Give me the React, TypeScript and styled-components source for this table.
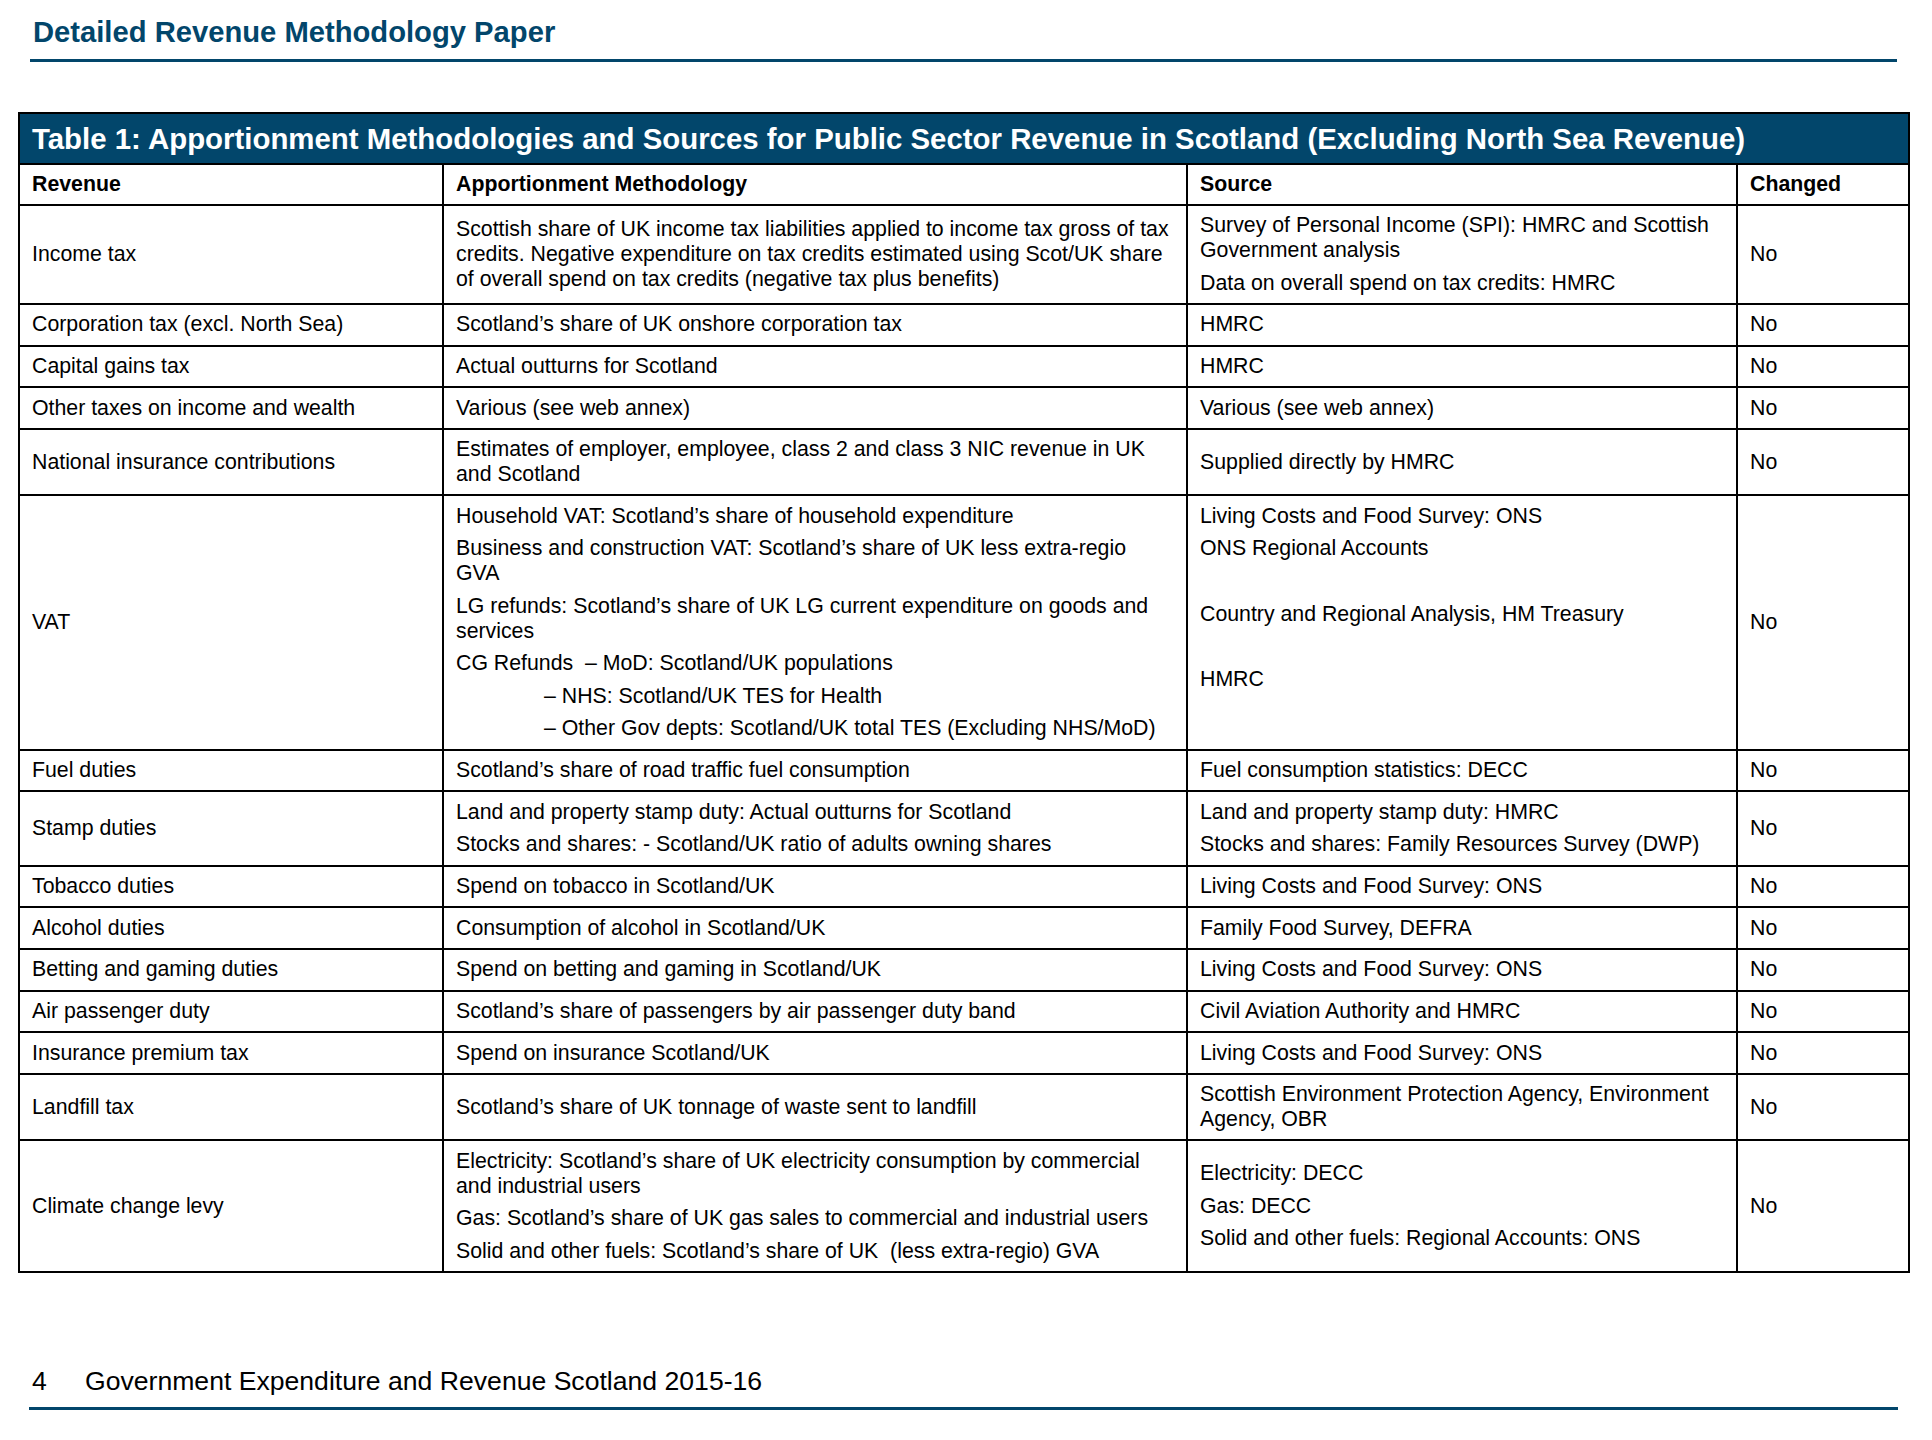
import React from "react";
import styled, { createGlobalStyle } from "styled-components";

const BLUE = "#02466b";

const Global = createGlobalStyle`
  html, body { margin: 0; padding: 0; background: #ffffff; }
  body { font-family: "Liberation Sans", Arial, Helvetica, sans-serif; color: #000; }
`;

const Page = styled.div`
  width: 1932px;
  display: flex;
  flex-direction: column;
`;

const Header = styled.header`
  margin-left: 30px;
  width: 1867px;
  padding: 15px 0 10px 3px;
  border-bottom: 3px solid ${BLUE};
  box-sizing: border-box;
`;

const Title = styled.h1`
  margin: 0;
  font-size: 29.2px;
  line-height: 34px;
  font-weight: 700;
  color: ${BLUE};
`;

const Table = styled.table`
  margin: 50px 0 0 18px;
  width: 1890px;
  border-collapse: collapse;
  table-layout: fixed;
  border: 2px solid #000;
  font-size: 21.3px;
  line-height: 24.8px;
`;

const TitleCell = styled.th`
  background: ${BLUE};
  color: #fff;
  font-size: 29.4px;
  line-height: 33px;
  font-weight: 700;
  text-align: left;
  padding: 8px 12px;
  border: 2px solid #000;
  white-space: nowrap;
`;

const HeadCell = styled.th`
  text-align: left;
  font-weight: 700;
  padding: 7px 12px;
  border: 2px solid #000;
  white-space: nowrap;
`;

const Cell = styled.td<{ $top?: boolean }>`
  vertical-align: ${(p) => (p.$top ? "top" : "middle")};
  padding: 7.45px 12px;
  border: 2px solid #000;
`;

const Para = styled.div<{ $indent?: boolean }>`
  white-space: pre;
  padding-left: ${(p) => (p.$indent ? "88px" : "0")};
  min-height: 24.8px;
  & + & {
    margin-top: 7.8px;
  }
`;

const Footer = styled.footer`
  margin: 93px 0 0 29px;
  width: 1869px;
  padding: 0 0 11px 3px;
  border-bottom: 3px solid ${BLUE};
  box-sizing: border-box;
  display: flex;
  align-items: baseline;
  font-size: 26.6px;
  line-height: 30px;
`;

const PageNum = styled.span`
  width: 53px;
`;

const FooterText = styled.span``;

type P = string | { text: string; indent?: boolean };

interface Row {
  revenue: string;
  method: P[];
  source: P[];
  sourceTop?: boolean;
  changed: string;
}

const rows: Row[] = [
  {
    revenue: "Income tax",
    method: [
      "Scottish share of UK income tax liabilities applied to income tax gross of tax\ncredits. Negative expenditure on tax credits estimated using Scot/UK share\nof overall spend on tax credits (negative tax plus benefits)",
    ],
    source: [
      "Survey of Personal Income (SPI): HMRC and Scottish\nGovernment analysis",
      "Data on overall spend on tax credits: HMRC",
    ],
    changed: "No",
  },
  {
    revenue: "Corporation tax (excl. North Sea)",
    method: ["Scotland’s share of UK onshore corporation tax"],
    source: ["HMRC"],
    changed: "No",
  },
  {
    revenue: "Capital gains tax",
    method: ["Actual outturns for Scotland"],
    source: ["HMRC"],
    changed: "No",
  },
  {
    revenue: "Other taxes on income and wealth",
    method: ["Various (see web annex)"],
    source: ["Various (see web annex)"],
    changed: "No",
  },
  {
    revenue: "National insurance contributions",
    method: ["Estimates of employer, employee, class 2 and class 3 NIC revenue in UK\nand Scotland"],
    source: ["Supplied directly by HMRC"],
    changed: "No",
  },
  {
    revenue: "VAT",
    method: [
      "Household VAT: Scotland’s share of household expenditure",
      "Business and construction VAT: Scotland’s share of UK less extra-regio\nGVA",
      "LG refunds: Scotland’s share of UK LG current expenditure on goods and\nservices",
      "CG Refunds  – MoD: Scotland/UK populations",
      { text: "– NHS: Scotland/UK TES for Health", indent: true },
      { text: "– Other Gov depts: Scotland/UK total TES (Excluding NHS/MoD)", indent: true },
    ],
    source: [
      "Living Costs and Food Survey: ONS",
      "ONS Regional Accounts",
      "",
      "Country and Regional Analysis, HM Treasury",
      "",
      "HMRC",
    ],
    sourceTop: true,
    changed: "No",
  },
  {
    revenue: "Fuel duties",
    method: ["Scotland’s share of road traffic fuel consumption"],
    source: ["Fuel consumption statistics: DECC"],
    changed: "No",
  },
  {
    revenue: "Stamp duties",
    method: [
      "Land and property stamp duty: Actual outturns for Scotland",
      "Stocks and shares: - Scotland/UK ratio of adults owning shares",
    ],
    source: [
      "Land and property stamp duty: HMRC",
      "Stocks and shares: Family Resources Survey (DWP)",
    ],
    changed: "No",
  },
  {
    revenue: "Tobacco duties",
    method: ["Spend on tobacco in Scotland/UK"],
    source: ["Living Costs and Food Survey: ONS"],
    changed: "No",
  },
  {
    revenue: "Alcohol duties",
    method: ["Consumption of alcohol in Scotland/UK"],
    source: ["Family Food Survey, DEFRA"],
    changed: "No",
  },
  {
    revenue: "Betting and gaming duties",
    method: ["Spend on betting and gaming in Scotland/UK"],
    source: ["Living Costs and Food Survey: ONS"],
    changed: "No",
  },
  {
    revenue: "Air passenger duty",
    method: ["Scotland’s share of passengers by air passenger duty band"],
    source: ["Civil Aviation Authority and HMRC"],
    changed: "No",
  },
  {
    revenue: "Insurance premium tax",
    method: ["Spend on insurance Scotland/UK"],
    source: ["Living Costs and Food Survey: ONS"],
    changed: "No",
  },
  {
    revenue: "Landfill tax",
    method: ["Scotland’s share of UK tonnage of waste sent to landfill"],
    source: ["Scottish Environment Protection Agency, Environment\nAgency, OBR"],
    changed: "No",
  },
  {
    revenue: "Climate change levy",
    method: [
      "Electricity: Scotland’s share of UK electricity consumption by commercial\nand industrial users",
      "Gas: Scotland’s share of UK gas sales to commercial and industrial users",
      "Solid and other fuels: Scotland’s share of UK  (less extra-regio) GVA",
    ],
    source: ["Electricity: DECC", "Gas: DECC", "Solid and other fuels: Regional Accounts: ONS"],
    changed: "No",
  },
];

const Paras: React.FC<{ items: P[] }> = ({ items }) => (
  <>
    {items.map((p, i) =>
      typeof p === "string" ? (
        <Para key={i}>{p}</Para>
      ) : (
        <Para key={i} $indent={p.indent}>
          {p.text}
        </Para>
      )
    )}
  </>
);

export default function App() {
  return (
    <Page>
      <Global />
      <Header>
        <Title>Detailed Revenue Methodology Paper</Title>
      </Header>
      <Table>
        <colgroup>
          <col style={{ width: 424 }} />
          <col style={{ width: 744 }} />
          <col style={{ width: 550 }} />
          <col style={{ width: 172 }} />
        </colgroup>
        <thead>
          <tr>
            <TitleCell colSpan={4}>
              Table 1: Apportionment Methodologies and Sources for Public Sector Revenue in Scotland (Excluding North Sea Revenue)
            </TitleCell>
          </tr>
          <tr>
            <HeadCell>Revenue</HeadCell>
            <HeadCell>Apportionment Methodology</HeadCell>
            <HeadCell>Source</HeadCell>
            <HeadCell>Changed</HeadCell>
          </tr>
        </thead>
        <tbody>
          {rows.map((r) => (
            <tr key={r.revenue}>
              <Cell>
                <Para>{r.revenue}</Para>
              </Cell>
              <Cell>
                <Paras items={r.method} />
              </Cell>
              <Cell $top={r.sourceTop}>
                <Paras items={r.source} />
              </Cell>
              <Cell>
                <Para>{r.changed}</Para>
              </Cell>
            </tr>
          ))}
        </tbody>
      </Table>
      <Footer>
        <PageNum>4</PageNum>
        <FooterText>Government Expenditure and Revenue Scotland 2015-16</FooterText>
      </Footer>
    </Page>
  );
}
